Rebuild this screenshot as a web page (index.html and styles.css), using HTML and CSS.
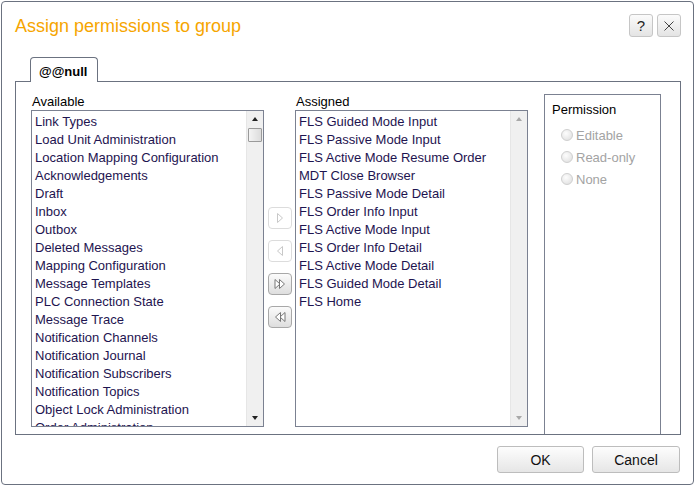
FILE: index.html
```html
<!DOCTYPE html>
<html>
<head>
<meta charset="utf-8">
<link rel="stylesheet" href="styles.css">
</head>
<body>
<div class="dialog">
  <div class="header">
    <div class="title">Assign permissions to group</div>
    <div class="hbtns">
      <button class="hbtn">?</button>
      <button class="hbtn"><svg width="12" height="12" viewBox="0 0 12 12"><path d="M1.5 1.5 L10.5 10.5 M10.5 1.5 L1.5 10.5" stroke="#444" stroke-width="1" fill="none"/></svg></button>
    </div>
  </div>
  <div class="tabs"><div class="tab">@@null</div></div>
  <div class="panel">
    <div class="col">
      <div class="label">Available</div>
      <div class="listbox">
        <div class="items">
          <div>Link Types</div>
          <div>Load Unit Administration</div>
          <div>Location Mapping Configuration</div>
          <div>Acknowledgements</div>
          <div>Draft</div>
          <div>Inbox</div>
          <div>Outbox</div>
          <div>Deleted Messages</div>
          <div>Mapping Configuration</div>
          <div>Message Templates</div>
          <div>PLC Connection State</div>
          <div>Message Trace</div>
          <div>Notification Channels</div>
          <div>Notification Journal</div>
          <div>Notification Subscribers</div>
          <div>Notification Topics</div>
          <div>Object Lock Administration</div>
          <div>Order Administration</div>
        </div>
        <div class="sbar">
          <div class="sarrow up"></div>
          <div class="thumb"></div>
          <div class="strack"></div>
          <div class="sarrow down"></div>
        </div>
      </div>
    </div>
    <div class="movers">
      <button class="mv off"><svg width="10" height="12" viewBox="0 0 10 12"><path d="M2.5 1.5 L7.5 6 L2.5 10.5 Z" fill="none" stroke="#c8c8c8"/></svg></button>
      <button class="mv off"><svg width="10" height="12" viewBox="0 0 10 12"><path d="M7.5 1.5 L2.5 6 L7.5 10.5 Z" fill="none" stroke="#c8c8c8"/></svg></button>
      <button class="mv"><svg width="14" height="12" viewBox="0 0 14 12"><path d="M2 1.5 L7 6 L2 10.5 Z M6.5 1.5 L11.5 6 L6.5 10.5 Z" fill="#fff" stroke="#777"/></svg></button>
      <button class="mv"><svg width="14" height="12" viewBox="0 0 14 12"><path d="M7.5 1.5 L2.5 6 L7.5 10.5 Z M12 1.5 L7 6 L12 10.5 Z" fill="#fff" stroke="#777"/></svg></button>
    </div>
    <div class="col">
      <div class="label">Assigned</div>
      <div class="listbox">
        <div class="items">
          <div>FLS Guided Mode Input</div>
          <div>FLS Passive Mode Input</div>
          <div>FLS Active Mode Resume Order</div>
          <div>MDT Close Browser</div>
          <div>FLS Passive Mode Detail</div>
          <div>FLS Order Info Input</div>
          <div>FLS Active Mode Input</div>
          <div>FLS Order Info Detail</div>
          <div>FLS Active Mode Detail</div>
          <div>FLS Guided Mode Detail</div>
          <div>FLS Home</div>
        </div>
        <div class="sbar">
          <div class="sarrow up dim"></div>
          <div class="strack"></div>
          <div class="sarrow down dim"></div>
        </div>
      </div>
    </div>
    <div class="perm">
      <div class="ptitle">Permission</div>
      <label class="radio"><span class="dot"></span>Editable</label>
      <label class="radio"><span class="dot"></span>Read-only</label>
      <label class="radio"><span class="dot"></span>None</label>
    </div>
  </div>
  <div class="footer">
    <button class="btn ok">OK</button>
    <button class="btn cancel">Cancel</button>
  </div>
</div>
</body>
</html>
```
FILE: styles.css
```css
* { box-sizing: border-box; }
html, body { margin: 0; padding: 0; background: #fff; }
body { padding: 1px; font-family: "Liberation Sans", Arial, sans-serif; font-size: 13px; color: #000; }
.dialog {
  width: 693px; height: 484px;
  border: 1px solid #6b7280; border-radius: 4px;
  background: #fff;
  display: flex; flex-direction: column;
  padding: 0 12px 0 13px;
}
.header { height: 55px; display: flex; align-items: flex-start; justify-content: space-between; }
.title { color: #f6a500; font-size: 18px; margin-top: 14px; }
.hbtns { display: flex; gap: 4px; margin-top: 12px; }
.hbtn {
  width: 24px; height: 23px; padding: 0;
  border: 1px solid #c6c6c6; border-radius: 3px;
  background: linear-gradient(#fbfbfb, #e4e4e4);
  font-family: "Liberation Sans", Arial, sans-serif; font-size: 15px; color: #222;
  display: flex; align-items: center; justify-content: center;
}
.tabs { height: 25px; display: flex; padding-left: 15px; position: relative; z-index: 1; }
.tab {
  width: 68px; height: 25px;
  border: 1px solid #6b7280; border-bottom: none; border-radius: 4px 4px 0 0;
  background: #fff; font-weight: bold; font-size: 13px;
  padding: 6px 0 0 8px;
}
.panel {
  margin-top: -1px;
  width: 666px; height: 354px;
  border: 1px solid #6b7280;
  display: flex; padding: 12px 0 0 15px;
  overflow: hidden;
}
.col { display: flex; flex-direction: column; width: 233px; }
.label { height: 16px; line-height: 16px; font-size: 13px; padding-left: 1px; }
.listbox {
  height: 317px; border: 1px solid #7b8191;
  display: flex; overflow: hidden;
}
.items { flex: 1; padding-top: 2px; overflow: hidden; color: #1e1450; }
.items div { height: 18px; line-height: 18px; padding-left: 3px; white-space: nowrap; }
.sbar { width: 17px; background: #f0f0f0; border-left: 1px solid #e6e6e6; display: flex; flex-direction: column; }
.sarrow { height: 16px; position: relative; }
.sarrow::after {
  content: ""; position: absolute; left: 5px; width: 0; height: 0;
  border-left: 3.5px solid transparent; border-right: 3.5px solid transparent;
}
.sarrow.up::after { top: 6px; border-bottom: 4px solid #222; }
.sarrow.down::after { top: 6px; border-top: 4px solid #222; }
.sarrow.dim.up::after { border-bottom-color: #a8a8a8; }
.sarrow.dim.down::after { border-top-color: #a8a8a8; }
.thumb { height: 14px; margin: 1px 0 0 1px; width: 14px; border: 1px solid #9a9a9a; border-radius: 1px; background: linear-gradient(90deg, #f4f4f4, #dcdcdc); }
.strack { flex: 1; }
.movers { width: 31px; display: flex; flex-direction: column; align-items: center; padding-top: 113px; gap: 11px; }
.mv {
  width: 24px; height: 22px; padding: 0;
  border: 1px solid #a8a8a8; border-radius: 4px;
  background: linear-gradient(#fbfbfb, #dedede);
  display: flex; align-items: center; justify-content: center;
}
.mv.off { border-color: #dcdcdc; background: #fff; }
.perm {
  margin-left: 16px; width: 117px; height: 400px;
  border: 1px solid #7b8191; border-bottom: none;
  padding: 6px 0 0 7px;
}
.ptitle { height: 18px; line-height: 18px; margin-bottom: 5px; }
.radio { display: flex; align-items: center; height: 22px; color: #a3a3a3; padding-left: 9px; }
.dot {
  width: 12px; height: 12px; border-radius: 50%;
  border: 1px solid #cfcfcf; background: radial-gradient(circle at 40% 35%, #fdfdfd, #dcdcdc);
  margin-right: 3px;
}
.footer { display: flex; justify-content: flex-end; gap: 8px; padding-top: 11px; padding-right: 1px; }
.btn {
  height: 27px; border: 1px solid #bdbdbd; border-radius: 3px;
  background: linear-gradient(#fdfdfd, #e6e6e6);
  font-family: "Liberation Sans", Arial, sans-serif; font-size: 14px; color: #111;
}
.ok { width: 87px; }
.cancel { width: 88px; }
```
